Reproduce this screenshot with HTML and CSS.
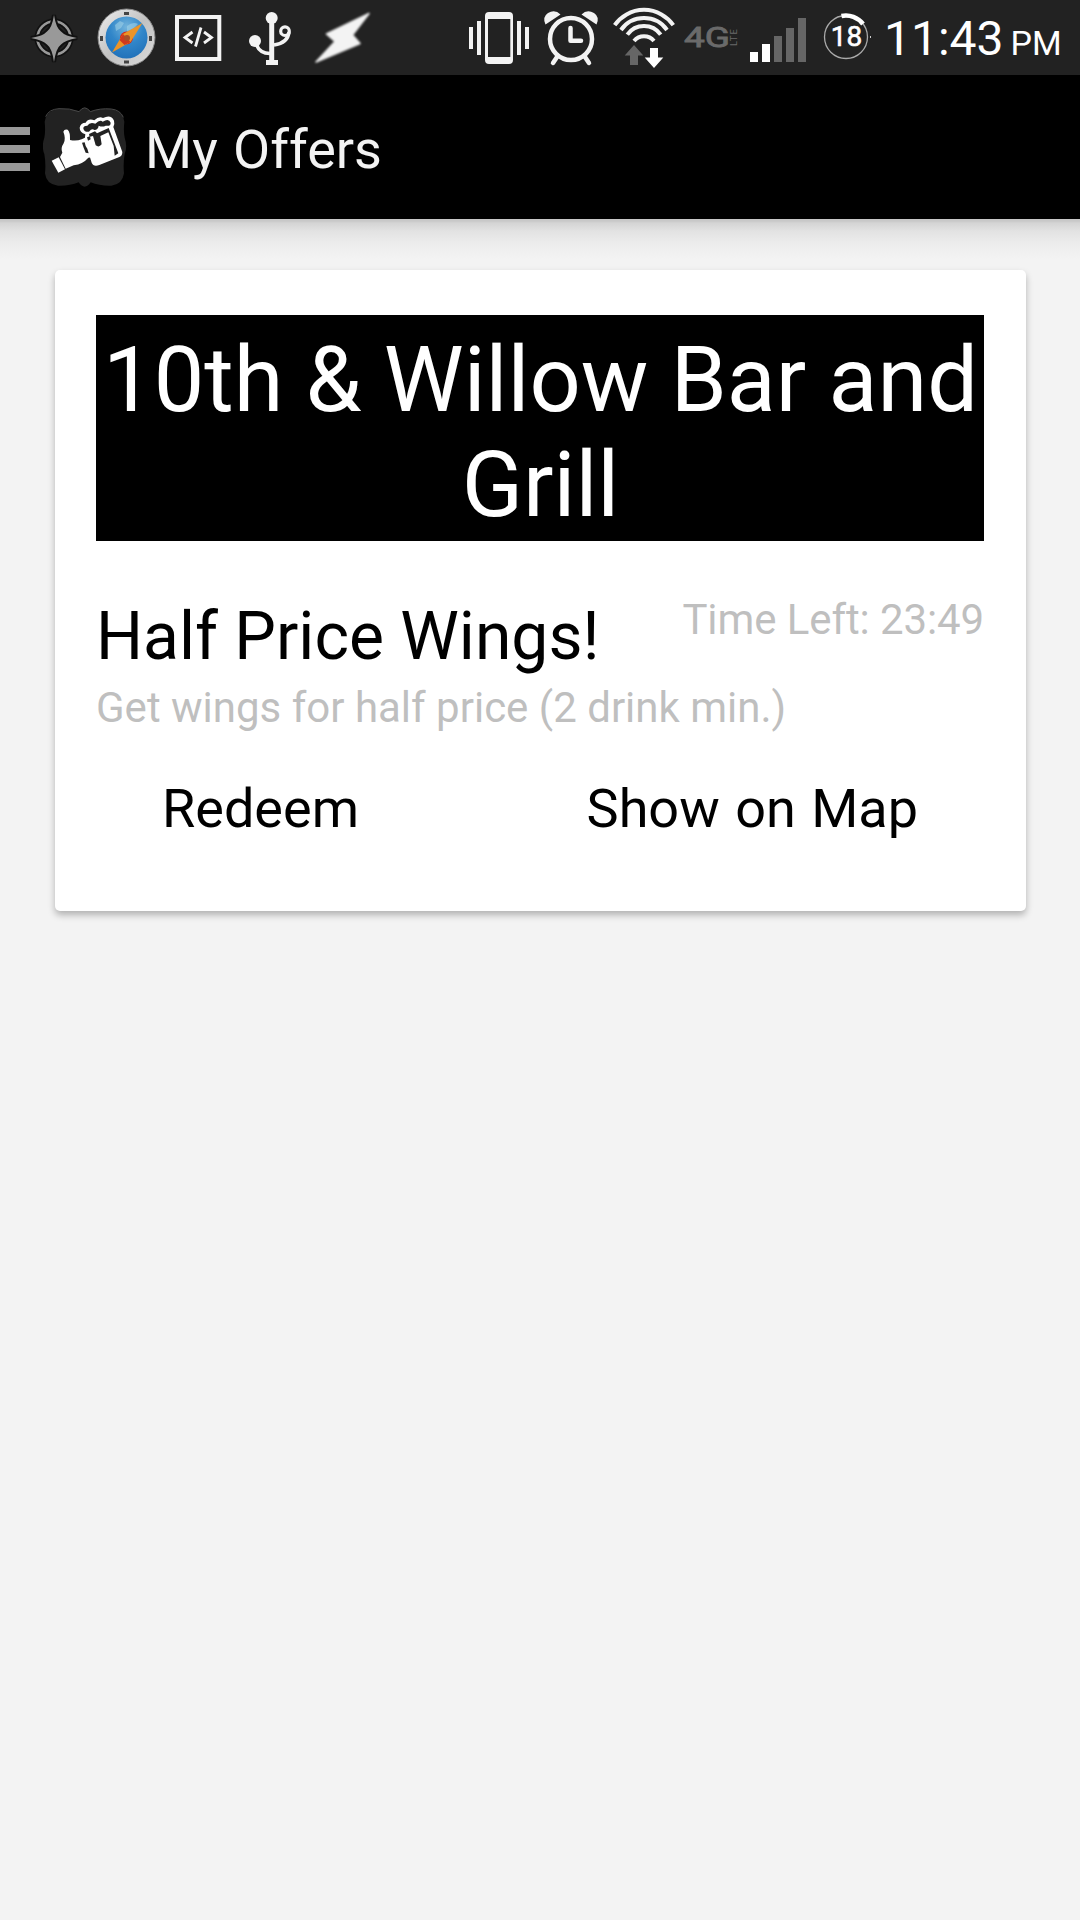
FILE: index.html
```html
<!DOCTYPE html>
<html lang="en">
<head>
<meta charset="utf-8">
<title>My Offers</title>
<link rel="stylesheet" href="styles.css">
</head>
<body>
<header class="status-bar">
  <div class="notifications">
    <svg class="cell" viewBox="18 0 72 75">
      <circle cx="54" cy="38" r="16.500" fill="none" stroke="#111" stroke-width="6"/>
      <circle cx="54" cy="38" r="16.500" fill="none" stroke="#999" stroke-width="2.600"/>
      <path d="M54 15Q56 28 61 31.500Q65 36 77 38Q65 40 61 44.500Q56 48 54 62Q52 48 47 44.500Q43 40 31 38Q43 36 47 31.500Q52 28 54 15Z" fill="#999" stroke="#111" stroke-width="4" paint-order="stroke"/>
    </svg>
    <svg class="cell" viewBox="90 0 72 75">
      <defs>
        <linearGradient id="rim" x1="0" y1="0" x2="1" y2="1"><stop offset="0" stop-color="#eee"/><stop offset=".5" stop-color="#c2c2c2"/><stop offset="1" stop-color="#ddd"/></linearGradient>
        <radialGradient id="sea" cx=".5" cy=".25" r=".8"><stop offset="0" stop-color="#73b4dc"/><stop offset=".5" stop-color="#3186c9"/><stop offset="1" stop-color="#1f6fb8"/></radialGradient>
      </defs>
      <circle cx="126.500" cy="37.500" r="28.500" fill="url(#rim)" stroke="#8a8a8a"/>
      <circle cx="126.500" cy="37.500" r="21" fill="url(#sea)"/>
      <path d="M115 25l5-4 4 2-3 5-5 3zM127 26q6-5 11-2l-5 5-6 2z" fill="#9fd0e6" opacity=".6"/>
      <path d="M124 13.500h5M124 62h5M101.500 36v5M150.500 36v5" stroke="#444" stroke-width="3"/>
      <circle cx="126.500" cy="38" r="6.500" fill="#d42b1c"/>
      <path d="M142.500 23L130.500 42 112 52.500 123 34Z" fill="#ec9427"/>
      <path d="M123 34l7.500 8-6 3-5-5z" fill="#cf3a1e"/>
      <circle cx="127" cy="38" r="3" fill="#a8502a"/>
    </svg>
    <svg class="cell" viewBox="162 0 72 75" fill="none" stroke="#f3f3f3">
      <rect x="177" y="17" width="42.300" height="42" stroke-width="4"/>
      <path d="M192.500 32l-7.500 5.500 7.500 5.500M204 32l7.500 5.500L204 43M201 27.500l-5.500 19" stroke-width="2.800"/>
    </svg>
    <svg class="cell" viewBox="234 0 72 75" fill="none" stroke="#f3f3f3">
      <path d="M271.700 18v46" stroke-width="5"/>
      <path d="M266 62.500h12" stroke-width="5"/>
      <circle cx="271.700" cy="18" r="6" fill="#f3f3f3" stroke="none"/>
      <circle cx="255" cy="41" r="6" fill="#f3f3f3" stroke="none"/>
      <path d="M256.500 45Q260 53.500 270 53.500M274 45Q288 43 289 32" stroke-width="3.400"/>
      <circle cx="285" cy="31.200" r="4.300" stroke-width="3.200"/>
    </svg>
    <svg class="cell bolt" viewBox="306 0 72 75">
      <path d="M369 13.500L326.500 34 335 41.500 316 62 360 43.500 352.500 35Z" fill="#f3f3f3" stroke="#f3f3f3" stroke-width="1.500" stroke-linejoin="round"/>
    </svg>
  </div>
  <div class="system">
    <svg class="cell" viewBox="463 0 72 75" fill="#f3f3f3">
      <path fill-rule="evenodd" d="M489 12h20q4 0 4 4v44q0 4-4 4h-20q-4 0-4-4V16q0-4 4-4zM488 19v38h22.300V19z"/>
      <path d="M469 27h4v22h-4zM477 21h4v34h-4zM517 21h4v34h-4zM525 27h4v22h-4z"/>
    </svg>
    <svg class="cell" viewBox="535 0 72 75" fill="none" stroke="#f3f3f3">
      <circle cx="571" cy="39" r="21" stroke-width="4.500"/>
      <path d="M570.500 28v12.800h10.500" stroke-width="4.500" stroke-linecap="round" stroke-linejoin="round"/>
      <path d="M557 57l-4 6M585 57l4 6" stroke-width="4.500" stroke-linecap="round"/>
      <path d="M545.500 24.500Q542 17 548 13Q555 9 560.500 14.500Z M596.500 24.500Q600 17 594 13Q587 9 581.500 14.500Z" fill="#f3f3f3" stroke="none"/>
    </svg>
    <svg class="cell" viewBox="607 0 72 75">
      <path d="M614.700 25.100A35.800 35.800 0 0 1 673.300 25.100M621 30A28.200 28.200 0 0 1 667 30M627.300 34.600A20.500 20.500 0 0 1 660.700 34.600M634 41A13 13 0 0 1 654 41" fill="none" stroke="#f3f3f3" stroke-width="4"/>
      <path d="M634 45l9.300 10.500H638V65h-8v-9.500h-5.300z" fill="#666"/>
      <path d="M654 68l-9.300-10.500h5.300V48h8v9.500h5.300z" fill="#fff"/>
    </svg>
    <svg class="cell net" viewBox="679 0 66 75" fill="#6a6a6a">
      <text x="684" y="47" font-size="28" stroke="#6a6a6a" stroke-width=".8" textLength="46" lengthAdjust="spacingAndGlyphs">4G</text>
      <text transform="translate(737.300 46) rotate(-90)" font-size="9.500" textLength="17">LTE</text>
    </svg>
    <svg class="cell net" viewBox="745 0 66 75">
      <path d="M750 52h8v10h-8zM762 44h8v18h-8z" fill="#fff"/>
      <path d="M774 36h8v26h-8zM786 28h8v34h-8zM798 18h8v44h-8z" fill="#666"/>
    </svg>
    <svg class="cell net" viewBox="811 0 66 75">
      <circle cx="846" cy="37" r="21.500" fill="none" stroke="#aaa" stroke-width="1.300"/>
      <path d="M841.500 16A21.500 21.500 0 0 1 863 24" fill="none" stroke="#fff" stroke-width="4.600"/>
      <path d="M870 36h1v2h-1z" fill="#ccc"/>
      <text x="846.500" y="46" text-anchor="middle" font-size="28" fill="#fff" stroke="#fff" stroke-width=".6">18</text>
    </svg>
    <div class="clock"><span class="time">11:43</span><span class="meridiem">PM</span></div>
  </div>
</header>
<nav class="action-bar">
  <div class="drawer"><i></i><i></i><i></i></div>
  <svg class="logo" viewBox="130 51 252 240">
    <path d="M238 64Q255 42 272 64Q300 54 335 57Q370 62 374 95Q371 125 375 143Q384 170 375 192Q370 220 373 250Q368 284 335 287Q300 288 273 277Q255 303 237 277Q210 288 175 287Q140 284 136 250Q139 220 134 192Q125 170 134 143Q138 125 135 95Q140 62 175 57Q210 54 238 64Z" fill="#222"/>
    <path d="M138 80Q147 58 178 56Q210 54 238 65Q255 42 272 65Q300 54 335 57Q362 60 371 82" fill="none" stroke="#484848" stroke-width="3"/>
    <path d="M156 212l21-10 19 36-20 10z" fill="#fff"/>
    <path d="M181 201L188 188Q182 175 192 160Q199 145 191 125Q194 116 204 119Q212 126 211 150Q230 154 246 148L262 140 284 200 266 203Q250 222 222 226L198 236Z" fill="#fff"/>
    <path d="M257 133Q240 127 240 113Q243 98 258 98Q266 84 284 91Q298 77 310 84Q334 72 343 92Q346 103 341 111L368 186Q368 198 359 201L299 225Q281 231 276 218L255 150Z" fill="#fff"/>
    <path d="M251 116Q250 107 263 107Q270 95 287 101Q301 88 309 95Q328 84 333 98Q333 110 318 107Q308 112 297 107Q296 119 284 120Q277 114 268 125Q256 128 251 116Z" fill="#222"/>
    <path d="M268 132L286 124 292 130 327 114 356 190 345 197 342 168 326 127 302 138 306 163Q298 174 288 166L280 138 270 140Z" fill="#222"/>
    <path d="M262 142l9-3 2 9-8 4zM247 158l8-1 3 11 5 8 4 14-9-2-6-15z" fill="#222"/>
  </svg>
  <h1 class="title">My Offers</h1>
</nav>
<main class="content">
  <article class="card">
    <h2 class="venue">10th &amp; Willow Bar and Grill</h2>
    <div class="offer-head">
      <h3 class="offer">Half Price Wings!</h3>
      <p class="time-left">Time Left: 23:49</p>
    </div>
    <p class="detail">Get wings for half price (2 drink min.)</p>
    <div class="actions"><button>Redeem</button><button>Show on Map</button></div>
  </article>
</main>
</body>
</html>
```
FILE: styles.css
```css
* { box-sizing: border-box; margin: 0; padding: 0; }
body { width: 1080px; min-height: 1920px; background: #f3f3f3; font-family: Roboto, sans-serif; color: #000; }
h1, h2, h3 { font-weight: 400; }
.status-bar { height: 75px; background: #222; display: flex; justify-content: space-between; padding-left: 18px; overflow: hidden; }
.notifications, .system { display: flex; }
.cell { width: 72px; height: 75px; display: block; flex: none; }
.net { width: 66px; }
.bolt { filter: blur(1px); }
.clock { width: 203px; display: flex; align-items: baseline; padding: 11px 0 0 7px; color: #fff; line-height: 56px; }
.time { font-size: 48px; }
.meridiem { font-size: 34px; margin-left: 7px; }
.action-bar { height: 144px; background: #000; display: flex; align-items: center; }
.drawer { width: 30px; display: grid; gap: 10px; margin-right: 13px; padding-top: 4px; }
.drawer i { height: 8px; background: #999; }
.logo { width: 84px; height: 80px; }
.title { font-size: 54px; color: #f3f3f3; margin-left: 18px; padding-top: 4px; word-spacing: 2px; }
.content { padding: 51px 54px 0 55px; background: linear-gradient(#c8c8c8 0, #c8c8c8 2px, #d4d4d4 4px, #e2e2e2 12px, #ececec 24px, #f3f3f3 40px); }
.card { height: 641px; background: #fff; border-radius: 5px; padding: 45px 42px 0 41px; box-shadow: 0 4px 7px rgba(0,0,0,.27); }
.venue { height: 226px; background: #000; color: #fff; font-size: 90px; line-height: 105px; text-align: center; padding: 13px 0 0 1px; }
.offer-head { display: flex; justify-content: space-between; margin-top: 57px; }
.offer { font-size: 66px; line-height: 78px; }
.time-left, .detail { font-size: 42px; line-height: 50px; color: #bfbfbf; }
.time-left { margin-top: -3px; letter-spacing: -.1px; }
.detail { margin-top: 7px; }
.actions { display: flex; justify-content: space-between; padding: 0 66px; margin-top: 44px; }
.actions button { flex: none; border: 0; background: none; font: 400 54px/64px Roboto, sans-serif; color: #000; word-spacing: 2px; }
```
